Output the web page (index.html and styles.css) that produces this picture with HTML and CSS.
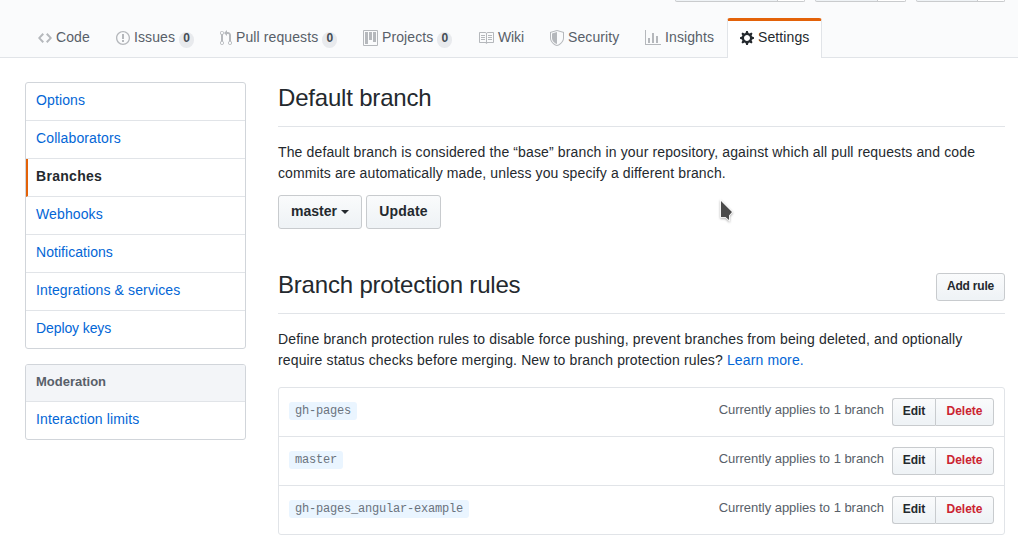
FILE: index.html
```html
<!DOCTYPE html>
<html lang="en">
<head>
<meta charset="utf-8">
<title>Branches</title>
<link rel="stylesheet" href="styles.css">
</head>
<body>
<header class="pagehead">
  <div class="actions">
    <div class="social s1"><span></span><span></span></div>
    <div class="social s2"><span></span><span></span></div>
    <div class="social s3"><span></span><span></span></div>
  </div>
  <nav class="tabs">
    <a class="tab t-code"><svg width="14" height="16" viewBox="0 0 14 16"><path d="M9.5 3L8 4.5 11.5 8 8 11.5 9.5 13 14 8 9.5 3zm-5 0L0 8l4.5 5L6 11.5 2.5 8 6 4.5 4.5 3z"/></svg><span>Code</span></a>
    <a class="tab t-issues"><svg width="14" height="16" viewBox="0 0 14 16"><path d="M7 2.3c3.14 0 5.7 2.56 5.7 5.7s-2.56 5.7-5.7 5.7A5.71 5.71 0 0 1 1.3 8c0-3.14 2.56-5.7 5.7-5.7zM7 1C3.14 1 0 4.14 0 8s3.14 7 7 7 7-3.14 7-7-3.14-7-7-7zm1 3H6v5h2V4zm0 6H6v2h2v-2z" fill-rule="evenodd"/></svg><span>Issues</span><b class="counter">0</b></a>
    <a class="tab t-pulls"><svg width="12" height="16" viewBox="0 0 12 16"><path fill-rule="evenodd" d="M11 11.28V5c-.03-.78-.34-1.47-.94-2.06C9.46 2.35 8.78 2.03 8 2H7V0L4 3l3 3V4h1c.27.02.48.11.69.31.21.2.3.42.31.69v6.28A1.993 1.993 0 0 0 10 15a1.993 1.993 0 0 0 1-3.72zm-1 2.92c-.66 0-1.2-.55-1.2-1.2 0-.65.55-1.2 1.2-1.2.65 0 1.2.55 1.2 1.2 0 .65-.55 1.2-1.2 1.2zM4 3c0-1.11-.89-2-2-2a1.993 1.993 0 0 0-1 3.72v6.56A1.993 1.993 0 0 0 2 15a1.993 1.993 0 0 0 1-3.72V4.72c.59-.34 1-.98 1-1.72zm-.8 10c0 .66-.55 1.2-1.2 1.2-.65 0-1.2-.55-1.2-1.2 0-.65.55-1.2 1.2-1.2.65 0 1.2.55 1.2 1.2zM2 4.2C1.34 4.2.8 3.65.8 3c0-.65.55-1.2 1.2-1.2.65 0 1.2.55 1.2 1.2 0 .65-.55 1.2-1.2 1.2z"/></svg><span>Pull requests</span><b class="counter">0</b></a>
    <a class="tab t-projects"><svg width="15" height="16" viewBox="0 0 15 16"><path fill-rule="evenodd" d="M10 12h3V2h-3v10zm-4-2h3V2H6v8zm-4 4h3V2H2v12zm-1 1h13V1H1v14zM14 0H1a1 1 0 0 0-1 1v14a1 1 0 0 0 1 1h13a1 1 0 0 0 1-1V1a1 1 0 0 0-1-1z"/></svg><span>Projects</span><b class="counter">0</b></a>
    <a class="tab t-wiki"><svg width="16" height="16" viewBox="0 0 16 16"><path fill-rule="evenodd" d="M3 5h4v1H3V5zm0 3h4V7H3v1zm0 2h4V9H3v1zm11-5h-4v1h4V5zm0 2h-4v1h4V7zm0 2h-4v1h4V9zm2-6v9c0 .55-.45 1-1 1H9.5l-1 1-1-1H2c-.55 0-1-.45-1-1V3c0-.55.45-1 1-1h5.5l1 1 1-1H15c.55 0 1 .45 1 1zm-8 .5L7.5 3H2v9h6V3.5zm7-.5H9.5l-.5.5V12h6V3z"/></svg><span>Wiki</span></a>
    <a class="tab t-security"><svg width="14" height="16" viewBox="0 0 14 16"><path fill-rule="evenodd" d="M0 2l7-2 7 2v6.02C14 12.69 8.69 16 7 16c-1.69 0-7-3.31-7-7.98V2zm1 .75L7 1l6 1.75v5.268C13 12.104 8.449 15 7 15c-1.449 0-6-2.896-6-6.982V2.75zm1 .75L7 2v12c-1.207 0-5-2.482-5-5.985V3.5z"/></svg><span>Security</span></a>
    <a class="tab t-insights"><svg width="16" height="16" viewBox="0 0 16 16"><path d="M16 14v1H0V0h1v14h15zM5 13H3V8h2v5zm4 0H7V3h2v10zm4 0h-2V6h2v7z"/></svg><span>Insights</span></a>
    <a class="tab t-settings selected"><svg width="14" height="16" viewBox="0 0 14 16"><path fill-rule="evenodd" d="M14 8.77v-1.6l-1.94-.64-.45-1.09.88-1.84-1.13-1.13-1.81.91-1.09-.45-.69-1.92h-1.6l-.63 1.94-1.11.45-1.84-.88-1.13 1.13.91 1.81-.45 1.09L0 7.23v1.59l1.94.64.45 1.09-.88 1.84 1.13 1.13 1.81-.91 1.09.45.69 1.92h1.59l.63-1.94 1.11-.45 1.84.88 1.13-1.13-.92-1.81.47-1.09L14 8.75v.02zM7 11c-1.66 0-3-1.34-3-3s1.34-3 3-3 3 1.34 3 3-1.34 3-3 3z"/></svg><span>Settings</span></a>
  </nav>
</header>
<main class="container">
  <aside class="sidebar">
    <nav class="menu">
      <a>Options</a>
      <a>Collaborators</a>
      <a class="current">Branches</a>
      <a>Webhooks</a>
      <a class="even">Notifications</a>
      <a>Integrations &amp; services</a>
      <a class="tight">Deploy keys</a>
    </nav>
    <nav class="menu">
      <h3>Moderation</h3>
      <a>Interaction limits</a>
    </nav>
  </aside>
  <section class="content">
    <div class="subhead"><h2>Default branch</h2></div>
    <p class="lead"><span class="l1">The default branch is considered the “base” branch in your repository, against which all pull requests and code</span><br><span class="l2">commits are automatically made, unless you specify a different branch.</span></p>
    <div class="buttons"><button class="btn master">master<i class="caret"></i></button><button class="btn update">Update</button></div>
    <div class="subhead rules"><h2>Branch protection rules</h2><button class="btn sm add">Add rule</button></div>
    <p class="lead"><span class="l3">Define branch protection rules to disable force pushing, prevent branches from being deleted, and optionally</span><br><span class="l4">require status checks before merging. New to branch protection rules? <a>Learn more.</a></span></p>
    <ul class="list">
      <li><code>gh-pages</code><span class="applies">Currently applies to 1 branch</span><span class="group"><button class="btn sm edit">Edit</button><button class="btn sm delete">Delete</button></span></li>
      <li><code>master</code><span class="applies">Currently applies to 1 branch</span><span class="group"><button class="btn sm edit">Edit</button><button class="btn sm delete">Delete</button></span></li>
      <li><code>gh-pages_angular-example</code><span class="applies">Currently applies to 1 branch</span><span class="group"><button class="btn sm edit">Edit</button><button class="btn sm delete">Delete</button></span></li>
    </ul>
  </section>
</main>
<svg class="pointer" width="18" height="24" viewBox="0 0 18 24"><path d="M2 2v16h4.500l3.500 3v-4.500l3-3.500z" fill="#4b4b4b" stroke="#fff" stroke-width="1.6" paint-order="stroke"/></svg>
</body>
</html>
```
FILE: styles.css
```css
* { box-sizing: border-box; }
body {
  margin: 0;
  height: 544px;
  overflow: hidden;
  background: #fff;
  color: #24292e;
  font: 14px/21px "Liberation Sans", Arial, sans-serif;
}
a { color: #0366d6; text-decoration: none; }
h2, h3, p, ul { margin: 0; padding: 0; }

.pagehead {
  height: 58px;
  background: #fafbfc;
  border-bottom: 1px solid #e1e4e8;
}
.actions { height: 18px; display: flex; gap: 10px; padding-left: 675px; }
.social {
  display: flex;
  height: 2px;
  border: 1px solid #c9cbcd;
  border-top: 0;
  border-radius: 0 0 3px 3px;
  background: #eff3f6;
}
.social span + span { flex: 1; background: #fff; border-left: 1px solid #c9cbcd; }
.s1 { width: 130px; }
.s1 span:first-child { width: 101px; }
.s2 { width: 91px; }
.s2 span:first-child { width: 61px; }
.s3 { width: 89px; }
.s3 span:first-child { width: 60px; }

.tabs { display: flex; padding-left: 25px; }
.tab {
  display: flex;
  height: 40px;
  padding: 12px 0 0 13px;
  color: #586069;
  white-space: nowrap;
}
.tab svg { flex: none; margin-right: 4px; fill: #b5b8bc; }
.tab span { line-height: 15px; letter-spacing: .1px; }
.t-code { width: 78px; }
.t-issues { width: 104px; }
.t-pulls { width: 143px; }
.t-projects { width: 115px; }
.t-wiki { width: 72px; }
.tab.t-wiki span { letter-spacing: -.1px; }
.t-security { width: 95px; }
.t-insights { width: 95px; }
.tab.selected {
  width: 95px;
  padding: 9px 0 0 12px;
  color: #24292e;
  background: #fff;
  border: 1px solid #e1e4e8;
  border-top: 3px solid #e36209;
  border-bottom: 0;
  border-radius: 3px 3px 0 0;
}
.selected svg { fill: #24292e; }
.counter {
  width: 15px;
  height: 16px;
  margin: 2px 0 0 4px;
  border-radius: 8px;
  background: #e8eaed;
  color: #444d56;
  font-size: 12px;
  line-height: 12px;
  text-align: center;
}

.container { display: flex; gap: 32px; padding: 24px 13px 0 25px; }
.sidebar { width: 221px; flex: none; }
.menu {
  margin-bottom: 15px;
  border: 1px solid #d1d5da;
  border-radius: 3px;
  overflow: hidden;
}
.menu a {
  display: block;
  height: 38px;
  padding: 7px 10px;
  border-bottom: 1px solid #e1e4e8;
  letter-spacing: .12px;
}
.menu a:last-child { height: 37px; border-bottom: 0; }
.menu .current {
  padding-left: 8px;
  border-left: 2px solid #e36209;
  color: #24292e;
  font-weight: 700;
  letter-spacing: .3px;
}
.menu .even { letter-spacing: .05px; }
.menu .tight { letter-spacing: -.1px; }
.menu h3 {
  height: 37px;
  padding: 7px 10px;
  border-bottom: 1px solid #e1e4e8;
  background: #f3f5f8;
  color: #586069;
  font-size: 13px;
  line-height: 20px;
}

.content { width: 727px; }
.subhead {
  display: flex;
  justify-content: space-between;
  height: 45px;
  border-bottom: 1px solid #e1e4e8;
}
.subhead h2 { font-size: 24px; font-weight: 400; line-height: 31px; letter-spacing: -.19px; }
.rules { height: 45px; margin-top: 40px; }
.rules .btn { margin-top: 4px; }
.lead { margin-top: 15px; white-space: nowrap; }
.l1 { letter-spacing: .134px; }
.l2 { letter-spacing: .12px; }
.l3 { letter-spacing: .148px; }
.l4 { letter-spacing: .132px; }
.buttons { display: flex; gap: 4px; margin-top: 11px; }
.btn {
  height: 34px;
  padding: 0 0 2px;
  border: 1px solid #c8cbce;
  border-radius: 3px;
  background: linear-gradient(#fafbfc, #eff3f6 90%);
  color: #24292e;
  font: bold 14px/20px "Liberation Sans", Arial, sans-serif;
}
.master { width: 84px; }
.update { width: 75px; letter-spacing: .2px; }
.caret {
  display: inline-block;
  margin-left: 4px;
  vertical-align: middle;
  border: 4px solid transparent;
  border-top-color: #24292e;
  border-bottom: 0;
}
.btn.sm { height: 28px; font-size: 12px; }
.btn.add { width: 69px; letter-spacing: -.2px; }

.list {
  margin-top: 16px;
  border: 1px solid #e1e4e8;
  border-radius: 3px;
  list-style: none;
}
.list li { display: flex; height: 49px; padding: 10px; }
.list li + li { border-top: 1px solid #e1e4e8; }
.list li:first-child { height: 48px; }
code {
  height: 18px;
  margin-top: 4px;
  padding: 0 6px;
  border-radius: 3px;
  background: #eaf5ff;
  color: #6a737d;
  font: 12px/19px "Liberation Mono", monospace;
  letter-spacing: -.2px;
}
.list li:first-child code { margin-top: 4px; }
.applies { margin: 2px 8px 0 auto; color: #586069; font-size: 13px; line-height: 20px; letter-spacing: -.03px; }
.group { display: flex; }
.edit { width: 43px; border-right: 0; border-radius: 3px 0 0 3px; }
.delete { width: 59px; border-radius: 0 3px 3px 0; color: #cb2431; }

/* mouse pointer floating above the page */
.pointer { position: absolute; left: 719px; top: 199px; filter: drop-shadow(0 1px 1px #0005); }
```
